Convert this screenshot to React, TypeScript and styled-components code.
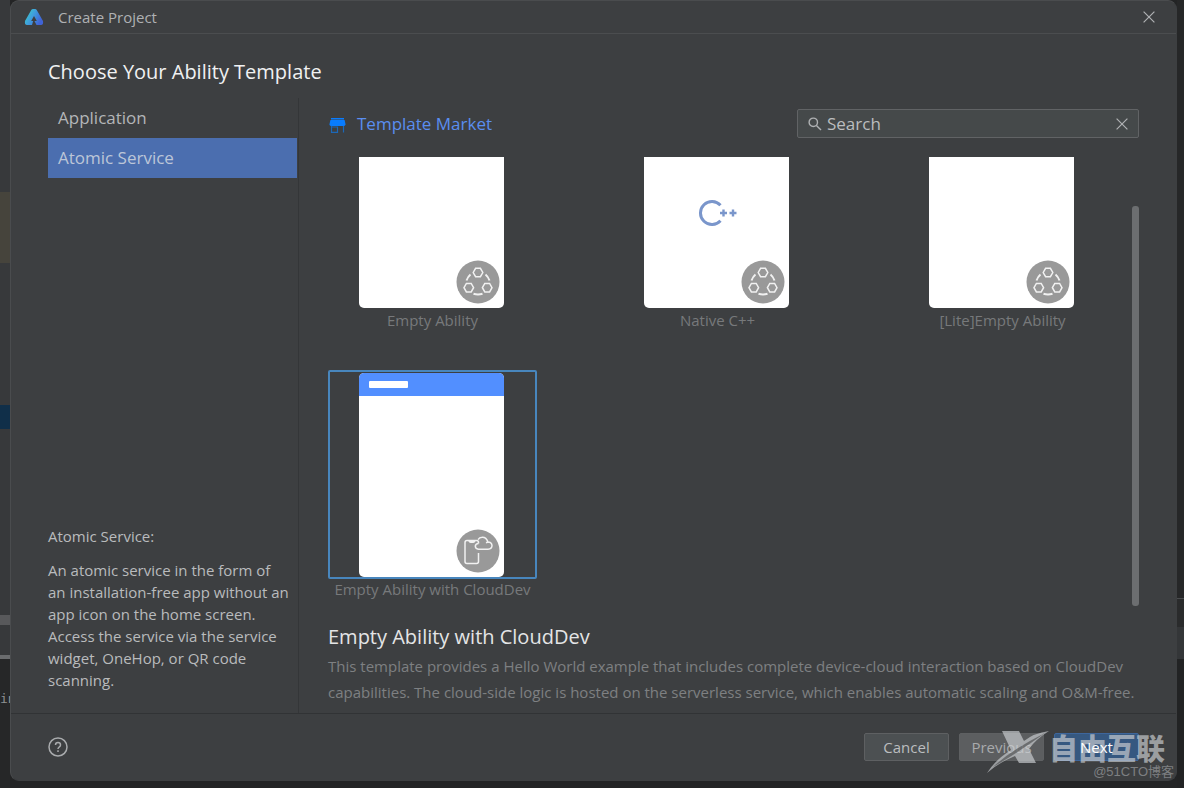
import React from "react";
import styled, { createGlobalStyle } from "styled-components";

const GlobalStyle = createGlobalStyle`
  *, *::before, *::after { box-sizing: border-box; }
  body {
    margin: 0;
    background: #232425;
    color: #b4b6b8;
    font-family: "Open Sans", "Noto Sans CJK SC", sans-serif;
    font-size: 15px;
    line-height: 20px;
  }
  button, input { font: inherit; color: inherit; }
  h1, h2, p, ul { margin: 0; padding: 0; font-weight: 400; }
`;

const Desktop = styled.div`
  display: grid;
  grid-template-columns: 10px minmax(0, 1fr) 7px;
  min-height: 100vh;
  overflow: hidden;
`;

const EditorEdge = styled.div`
  display: flex;
  flex-direction: column;
  overflow: hidden;
`;

const Band = styled.div<{ $h?: number; $color: string }>`
  flex: ${(p) => (p.$h ? `0 0 ${p.$h}px` : "1 1 0")};
  background: ${(p) => p.$color};
`;

const ConsoleText = styled.div`
  flex: 1;
  padding-top: 30px;
  background: #262728;
  color: #8f9193;
  font-family: "DejaVu Sans Mono", monospace;
  font-size: 13px;
  white-space: nowrap;
`;

const Dialog = styled.section`
  display: flex;
  flex-direction: column;
  margin-bottom: 7px;
  background: #3d3f41;
  border: 1px solid #4a4c4e;
  border-right-color: #3d3f41;
  border-bottom-color: #3d3f41;
  border-radius: 9px;
`;

const TitleBar = styled.header`
  display: flex;
  align-items: center;
  height: 33px;
  padding: 0 21px 0 13px;
  border-bottom: 1px solid #4b4d4f;
`;

const WindowTitle = styled.span`
  flex: 1;
  margin-left: 14px;
  color: #afb1b3;
`;

const IconButton = styled.button`
  display: flex;
  align-items: center;
  justify-content: center;
  padding: 0;
  border: 0;
  background: none;
  color: #afb1b3;
`;

const Heading = styled.h1`
  padding: 24px 37px 12px;
  font-size: 20px;
  line-height: 28px;
  color: #f0f1f2;
`;

const Body = styled.div`
  display: flex;
  flex: 1;
  padding: 0 37px;
`;

const Sidebar = styled.aside`
  display: flex;
  flex-direction: column;
  flex: 0 0 251px;
  justify-content: space-between;
  padding: 0 1px 22px 0;
  border-right: 1px solid #343638;
`;

const NavItem = styled.button<{ $active?: boolean }>`
  display: block;
  width: 100%;
  height: 40px;
  padding: 0 10px;
  border: 0;
  background: ${(p) => (p.$active ? "#4b6eaf" : "none")};
  color: ${(p) => (p.$active ? "#bcc6d8" : "#b4b6b8")};
  font-size: 17px;
  text-align: left;
`;

const About = styled.div`
  padding-right: 8px;
  line-height: 22px;
  color: #b9bbbd;
`;

const AboutTitle = styled.p`
  margin-bottom: 12px;
`;

const Main = styled.main`
  flex: 1;
  min-width: 0;
  padding: 11px 0 0 29px;
`;

const Toolbar = styled.div`
  display: flex;
  align-items: center;
  justify-content: space-between;
  margin-bottom: 19px;
`;

const MarketLink = styled.a`
  display: flex;
  align-items: center;
  gap: 10px;
  color: #5a8ef0;
  font-size: 17px;
  text-decoration: none;
`;

const SearchField = styled.label`
  display: flex;
  align-items: center;
  flex: 0 1 342px;
  height: 29px;
  padding: 0 10px;
  border: 1px solid #616365;
  border-radius: 2px;
  background: #45494a;
  color: #afb1b3;
`;

const SearchInput = styled.input`
  flex: 1;
  min-width: 0;
  padding: 0 5px;
  border: 0;
  outline: 0;
  background: none;
  font-size: 17px;
  &::placeholder { color: #bbbdbf; opacity: 1; }
`;

const Gallery = styled.div`
  display: flex;
  justify-content: space-between;
  height: 449px;
  margin-bottom: 17px;
`;

const Grid = styled.div`
  display: grid;
  grid-template-columns: repeat(3, 209px);
  justify-content: space-between;
  align-content: start;
  row-gap: 40px;
  flex: 1;
`;

const ScrollTrack = styled.div`
  flex: 0 0 32px;
  display: flex;
  justify-content: flex-end;
  align-items: flex-end;
`;

const ScrollThumb = styled.div`
  width: 7px;
  height: 400px;
  border-radius: 3px;
  background: #6c6e70;
`;

const TemplateCard = styled.button`
  display: block;
  padding: 0;
  border: 0;
  background: none;
  text-align: center;
  color: #77797b;
`;

const Frame = styled.span<{ $selected?: boolean; $cut?: boolean }>`
  display: flex;
  justify-content: center;
  padding: ${(p) => (p.$cut ? 0 : 1)}px 2px 0 0;
  border: 2px solid ${(p) => (p.$selected ? "#4886bd" : "transparent")};
  border-top-width: ${(p) => (p.$cut ? 0 : 2)}px;
  border-radius: 2px;
`;

const Preview = styled.span<{ $cut?: boolean }>`
  display: flex;
  flex-direction: column;
  justify-content: space-between;
  width: 145px;
  height: ${(p) => (p.$cut ? 151 : 204)}px;
  overflow: hidden;
  border-radius: ${(p) => (p.$cut ? "0 0 5px 5px" : "5px")};
  background: #fff;
`;

const PreviewBar = styled.span`
  display: block;
  padding: 8px 10px;
  height: 23px;
  background: #528fff;
`;

const PreviewTitle = styled.span`
  display: block;
  width: 39px;
  height: 7px;
  border-radius: 1px;
  background: #fff;
`;

const PreviewArt = styled.span`
  display: flex;
  justify-content: center;
  padding: 42px 0 0 3px;
`;

const Badge = styled.span`
  display: flex;
  margin: auto 4px 4px auto;
`;

const CardLabel = styled.span`
  display: block;
  line-height: 20px;
`;

const DetailTitle = styled.h2`
  font-size: 20px;
  line-height: 28px;
  color: #e4e5e6;
`;

const DetailText = styled.p`
  margin-top: 2px;
  line-height: 26px;
  color: #7e8082;
`;

const Footer = styled.footer`
  display: flex;
  align-items: center;
  justify-content: space-between;
  height: 67px;
  padding: 0 37px;
  border-top: 1px solid #313335;
`;

const Actions = styled.div`
  display: flex;
  gap: 10px;
`;

const ActionButton = styled.button<{ $kind?: "muted" | "primary" }>`
  width: 85px;
  height: 28px;
  padding: 0;
  border: 1px solid ${(p) => (p.$kind === "primary" ? "#3d669c" : "#5e6062")};
  border-radius: 2px;
  background: ${(p) => (p.$kind === "primary" ? "#365880" : p.$kind === "muted" ? "#5c5e60" : "#4c5052")};
  color: ${(p) => (p.$kind === "primary" ? "#fff" : p.$kind === "muted" ? "#a8aaac" : "#bbbdbf")};
`;

const NextLabel = styled.span`
  position: relative;
  z-index: 2;
  font-weight: 500;
`;

const Watermark = styled.div`
  position: absolute;
  right: 10px;
  bottom: 9px;
  z-index: 1;
  display: flex;
  flex-direction: column;
  align-items: flex-end;
  pointer-events: none;
`;

const WatermarkBrand = styled.div`
  display: flex;
  align-items: flex-start;
  height: 36px;
  margin-right: 9px;
  color: rgba(205, 208, 211, 0.66);
  font-family: "Noto Sans CJK SC", sans-serif;
  font-size: 29px;
  font-weight: 900;
  line-height: 36px;
`;

const WatermarkCredit = styled.div`
  color: #7d7f81;
  font-family: "Liberation Sans", "Noto Sans CJK SC", sans-serif;
  font-size: 13px;
  line-height: 14px;
`;

const Stage = styled.div`
  position: relative;
`;

function AppLogo() {
  return (
    <svg width="20" height="18" viewBox="0 0 20 18" aria-hidden="true">
      <defs>
        <linearGradient id="logo" x1="0" y1="0" x2="1" y2="0.5">
          <stop offset="0" stopColor="#3ad6c4" />
          <stop offset="0.5" stopColor="#3f9fdc" />
          <stop offset="1" stopColor="#4063d6" />
        </linearGradient>
      </defs>
      <path
        d="M7.400 1.800Q8 1 9 1H11.200Q12 1 12.600 1.800L19 13Q19.600 17 17 17H12.500L10.500 13H12.800L10 8L7.200 13H9.200L8 17H3Q.4 17 1 13Z"
        fill="url(#logo)"
      />
    </svg>
  );
}

function CloseIcon() {
  return (
    <svg width="12" height="12" viewBox="0 0 12 12" fill="none" stroke="currentColor" strokeWidth="1.200" aria-hidden="true">
      <path d="M.6.6l10.800 10.800M11.400.6L.6 11.400" />
    </svg>
  );
}

function StoreIcon() {
  return (
    <svg width="19" height="18" viewBox="0 0 19 18" aria-hidden="true">
      <path d="M3 3h13v1.500H3zM2.400 5h14.200l1 4.500Q17 11 15.500 11H3.500Q1.600 11 1.400 9.500z" fill="#087cff" />
      <path d="M3.500 11v6.400h6v-5.400h-6M15.500 11v6.500" fill="none" stroke="#1c68b8" strokeWidth="1.200" />
    </svg>
  );
}

function SearchIcon() {
  return (
    <svg width="14" height="14" viewBox="0 0 14 14" fill="none" stroke="currentColor" strokeWidth="1.400" aria-hidden="true">
      <circle cx="5.300" cy="5.300" r="4.200" />
      <path d="M8.400 8.400L13 13" />
    </svg>
  );
}

function AtomBadge() {
  const hex = (x: number, y: number) =>
    `M${x - 4.800} ${y}l2.400-4.200h4.800l2.400 4.200l-2.400 4.200h-4.800z`;
  return (
    <svg width="44" height="44" viewBox="0 0 44 44" fill="none" stroke="#f1f1f1" strokeWidth="1.500" aria-hidden="true">
      <circle cx="22" cy="22" r="21.500" fill="#999" stroke="none" />
      <path d={hex(22, 12.5)} />
      <path d={hex(12.8, 27.700)} />
      <path d={hex(31.2, 27.700)} />
      <path d="M10.500 20.500Q12 16.500 14.500 14.500M33.500 20.500Q32 16.500 29.500 14.500M17.500 33.700Q22 35.200 26.500 33.700" strokeWidth="2" />
    </svg>
  );
}

function CloudBadge() {
  return (
    <svg width="44" height="44" viewBox="0 0 44 44" fill="none" stroke="#f1f1f1" strokeWidth="1.500" aria-hidden="true">
      <circle cx="22" cy="22" r="21.500" fill="#999" stroke="none" />
      <path d="M22.500 24v8.500q0 2-2 2h-9.500q-2 0-2-2v-19q0-2 2-2h9.500q2 0 2 2v1" />
      <path d="M13 11.700q.5 1.600 1.700 1.600h2.500q1.200 0 1.700-1.600" fill="#f1f1f1" />
      <path d="M22.500 20.200q-3.200-.2-3.200-3.100q.2-2.500 3.200-2.600M22.500 20.200h9.500q4-.3 4-3.700q-.2-3.300-4-3.500q-1.800-5-6-4.700q-2.500.1-4 2.300M32 13l-2 .7" />
    </svg>
  );
}

function CppLogo() {
  return (
    <svg width="41" height="28" viewBox="0 0 41 28" fill="none" stroke="#7a96cb" strokeWidth="3" aria-hidden="true">
      <path d="M22.500 6.300A11.500 11.500 0 1 0 22.500 21.700" />
      <path d="M22 14h7M25.500 10.500v7M31.500 14h7M35 10.500v7" strokeWidth="2.400" />
    </svg>
  );
}

function HelpIcon() {
  return (
    <svg width="20" height="20" viewBox="0 0 20 20" fill="none" stroke="#a9abad" strokeWidth="1.500" aria-hidden="true">
      <circle cx="10" cy="10" r="9" />
      <path d="M7.500 8Q7.500 5.500 10 5.500T12.500 8Q12.500 9.200 11.200 10Q10 10.800 10 12M10 13.200v1.700" />
    </svg>
  );
}

function WatermarkX() {
  return (
    <svg width="64" height="45" viewBox="0 0 64 45" fill="rgb(205,208,211)" fillOpacity="0.66" aria-hidden="true">
      <path d="M17 2H34L39 12Q49 4 64 2Q51 10 44 20L51 34H34L30 27Q13 34 2 44Q10 31 26 21Z" />
      <path d="M8 38Q26 21 60 4Q34 23 8 38Z" fill="#4b4d4f" fillOpacity=".65" />
    </svg>
  );
}

type Template = { name: string; cut?: boolean; selected?: boolean; art?: React.ReactNode; bar?: boolean; cloud?: boolean };

const templates: Template[] = [
  { name: "Empty Ability", cut: true },
  { name: "Native C++", cut: true, art: <CppLogo /> },
  { name: "[Lite]Empty Ability", cut: true },
  { name: "Empty Ability with CloudDev", selected: true, bar: true, cloud: true },
];

export default function App() {
  return (
    <Stage>
      <GlobalStyle />
      <Desktop>
        <EditorEdge>
          <Band $h={192} $color="#37393b" />
          <Band $h={71} $color="#46443c" />
          <Band $h={142} $color="#37393b" />
          <Band $h={24} $color="#102f49" />
          <Band $h={186} $color="#37393b" />
          <Band $h={10} $color="#58595b" />
          <Band $h={30} $color="#37393b" />
          <Band $h={4} $color="#6a6c6e" />
          <ConsoleText>in</ConsoleText>
        </EditorEdge>
        <Dialog aria-label="Create Project">
          <TitleBar>
            <AppLogo />
            <WindowTitle>Create Project</WindowTitle>
            <IconButton aria-label="Close">
              <CloseIcon />
            </IconButton>
          </TitleBar>
          <Heading>Choose Your Ability Template</Heading>
          <Body>
            <Sidebar>
              <nav>
                <NavItem>Application</NavItem>
                <NavItem $active>Atomic Service</NavItem>
              </nav>
              <About>
                <AboutTitle>Atomic Service:</AboutTitle>
                <p>
                  An atomic service in the form of an installation-free app without an app icon on the home screen.
                  Access the service via the service widget, OneHop, or QR code scanning.
                </p>
              </About>
            </Sidebar>
            <Main>
              <Toolbar>
                <MarketLink href="#market">
                  <StoreIcon />
                  Template Market
                </MarketLink>
                <SearchField>
                  <SearchIcon />
                  <SearchInput placeholder="Search" aria-label="Search" />
                  <IconButton aria-label="Clear search">
                    <CloseIcon />
                  </IconButton>
                </SearchField>
              </Toolbar>
              <Gallery>
                <Grid>
                  {templates.map((t) => (
                    <TemplateCard key={t.name} aria-pressed={!!t.selected}>
                      <Frame $cut={t.cut} $selected={t.selected}>
                        <Preview $cut={t.cut}>
                          {t.bar && (
                            <PreviewBar>
                              <PreviewTitle />
                            </PreviewBar>
                          )}
                          {t.art && <PreviewArt>{t.art}</PreviewArt>}
                          <Badge>{t.cloud ? <CloudBadge /> : <AtomBadge />}</Badge>
                        </Preview>
                      </Frame>
                      <CardLabel>{t.name}</CardLabel>
                    </TemplateCard>
                  ))}
                </Grid>
                <ScrollTrack>
                  <ScrollThumb />
                </ScrollTrack>
              </Gallery>
              <DetailTitle>Empty Ability with CloudDev</DetailTitle>
              <DetailText>
                This template provides a Hello World example that includes complete device-cloud interaction based on
                CloudDev capabilities. The cloud-side logic is hosted on the serverless service, which enables automatic
                scaling and O&amp;M-free.
              </DetailText>
            </Main>
          </Body>
          <Footer>
            <IconButton aria-label="Help">
              <HelpIcon />
            </IconButton>
            <Actions>
              <ActionButton>Cancel</ActionButton>
              <ActionButton $kind="muted">Previous</ActionButton>
              <ActionButton $kind="primary">
                <NextLabel>Next</NextLabel>
              </ActionButton>
            </Actions>
          </Footer>
        </Dialog>
        <EditorEdge>
          <Band $h={598} $color="#262728" />
          <Band $h={1} $color="#4a4c4e" />
          <Band $h={28} $color="#2a2b2c" />
          <Band $h={32} $color="#343638" />
          <Band $color="#222324" />
        </EditorEdge>
      </Desktop>
      <Watermark>
        <WatermarkBrand>
          <WatermarkX />
          自由互联
        </WatermarkBrand>
        <WatermarkCredit>@51CTO博客</WatermarkCredit>
      </Watermark>
    </Stage>
  );
}
